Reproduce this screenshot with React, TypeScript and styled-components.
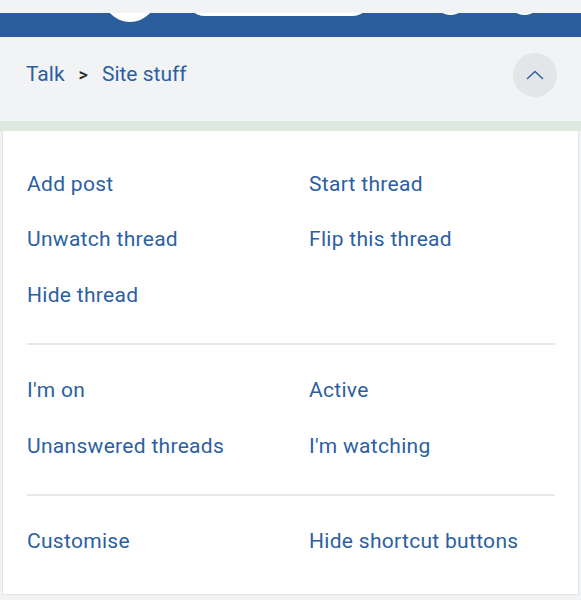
import styled, { createGlobalStyle } from 'styled-components'

const GlobalStyle = createGlobalStyle`
  html, body {
    margin: 0;
    padding: 0;
    background: #f2f3f5;
    font-family: Roboto, "Noto Sans", Arial, sans-serif;
  }
`

const Page = styled.div`
  width: 581px;
  height: 600px;
  overflow: hidden;
  background: #f2f3f5;
`

const TopStrip = styled.div`
  height: 13px;
  background: #f2f3f5;
`

const BlueBar = styled.div`
  height: 24px;
  background: #2b5e9e;
  overflow: hidden;
  display: flex;
  align-items: flex-start;
`

type ShapeProps = {
  $w: number
  $h: number
  $shown: number
  $left: number
}

const HeaderShape = styled.div<ShapeProps>`
  flex: none;
  width: ${(p) => p.$w}px;
  height: ${(p) => p.$h}px;
  margin-top: ${(p) => p.$shown - p.$h}px;
  margin-left: ${(p) => p.$left}px;
  border-radius: ${(p) => p.$h / 2}px;
  background: #ffffff;
`

const Breadcrumbs = styled.div`
  box-sizing: border-box;
  height: 84px;
  display: flex;
  align-items: center;
  justify-content: space-between;
  padding: 0 24px 8px 26px;
`

const Trail = styled.div`
  display: flex;
  align-items: center;
  gap: 14px;
  font-size: 21px;
  margin-top: -2px;
`

const Crumb = styled.a`
  color: #2c5fa1;
  text-decoration: none;
`

const Separator = styled.span`
  color: #2b2b2b;
  font-size: 18px;
  font-weight: 500;
`

const ToggleButton = styled.button`
  width: 44px;
  height: 44px;
  border-radius: 50%;
  border: none;
  background: #e3e5e9;
  display: flex;
  align-items: center;
  justify-content: center;
  padding: 0;
`

const GreenStrip = styled.div`
  height: 10px;
  background: #dde9df;
`

const Card = styled.div`
  margin: 0 2px;
  background: #ffffff;
  border: 1px solid #e3e4e6;
  border-top: none;
  padding: 0 23px 5px 24px;
`

const Section = styled.div<{ $top: number; $divider?: boolean }>`
  display: grid;
  grid-template-columns: 282px 1fr;
  grid-auto-rows: 55.5px;
  align-items: center;
  padding: ${(p) => p.$top}px 0 20px;
  border-bottom: ${(p) => (p.$divider ? '2px solid #e7e8ea' : 'none')};
`

const MenuLink = styled.a`
  color: #2c5fa1;
  font-size: 21px;
  letter-spacing: 0.3px;
  text-decoration: none;
  white-space: nowrap;
`

const ChevronUp = () => (
  <svg width="18" height="10" viewBox="0 0 18 10" fill="none">
    <path d="M1 9 L9 1.5 L17 9" stroke="#2c5fa1" strokeWidth="1.4" />
  </svg>
)

const sections = [
  ['Add post', 'Start thread', 'Unwatch thread', 'Flip this thread', 'Hide thread'],
  ["I'm on", 'Active', 'Unanswered threads', "I'm watching"],
  ['Customise', 'Hide shortcut buttons'],
]

export default function App() {
  return (
    <Page>
      <GlobalStyle />
      <TopStrip />
      <BlueBar>
        <HeaderShape $w={54} $h={54} $shown={9} $left={103} />
        <HeaderShape $w={187} $h={40} $shown={3} $left={28} />
        <HeaderShape $w={33} $h={33} $shown={2} $left={62} />
        <HeaderShape $w={33} $h={33} $shown={2} $left={41} />
      </BlueBar>
      <Breadcrumbs>
        <Trail>
          <Crumb href="#">Talk</Crumb>
          <Separator>&gt;</Separator>
          <Crumb href="#">Site stuff</Crumb>
        </Trail>
        <ToggleButton aria-label="Collapse">
          <ChevronUp />
        </ToggleButton>
      </Breadcrumbs>
      <GreenStrip />
      <Card>
        {sections.map((items, i) => (
          <Section key={i} $top={i === 0 ? 25 : 18} $divider={i < sections.length - 1}>
            {items.map((label) => (
              <MenuLink key={label} href="#">
                {label}
              </MenuLink>
            ))}
          </Section>
        ))}
      </Card>
    </Page>
  )
}
